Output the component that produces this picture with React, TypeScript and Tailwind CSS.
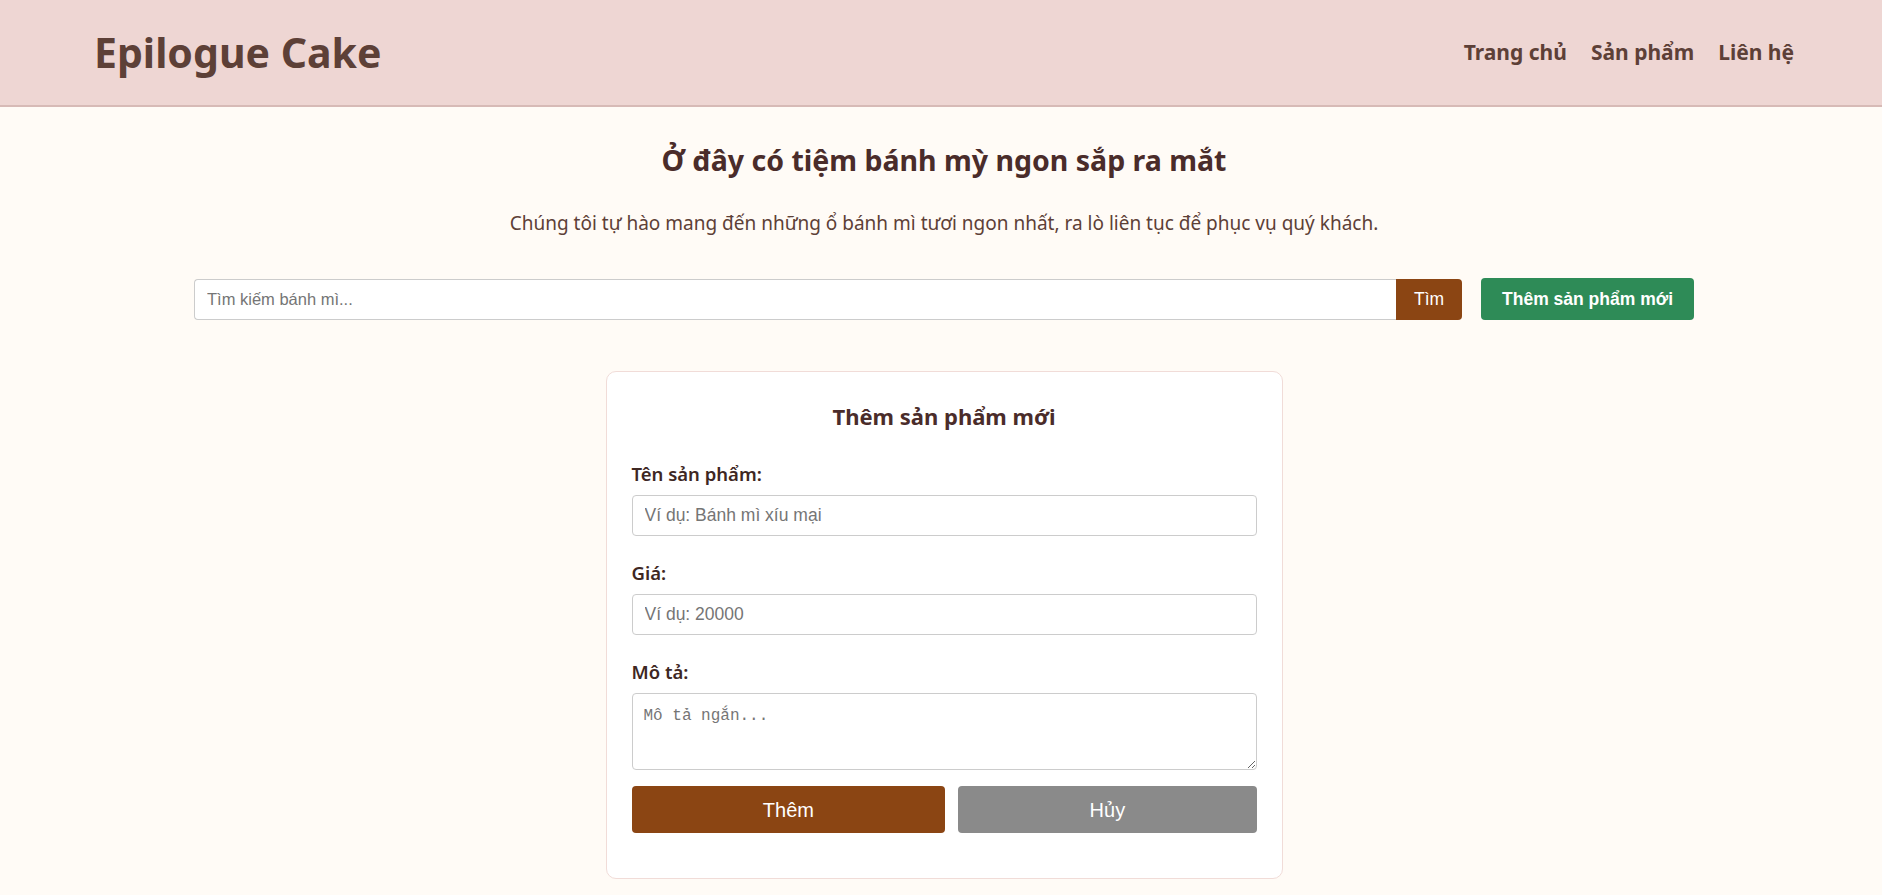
import { useState } from 'react';

export default function App() {
  const [search, setSearch] = useState('');
  const [showForm, setShowForm] = useState(true);

  const inputCls =
    "w-full h-[41px] px-[12px] border border-[#cccccc] rounded-[4px] bg-white text-[17.5px] text-[#333] placeholder:text-[#757575] outline-none font-['Liberation_Sans',Arial,sans-serif]";

  return (
    <div className="min-h-screen bg-[#FFFBF6] font-['Noto_Sans',sans-serif]">
      {/* Header */}
      <header className="h-[107px] bg-[#EED6D3] border-b-2 border-[#D7BAB6] flex items-center justify-between pl-[94px] pr-[88px]">
        <h1 className="text-[41px] font-bold text-[#5D4037] leading-none">Epilogue Cake</h1>
        <nav className="flex items-center gap-[24px] text-[21px] font-bold text-[#5D4037]">
          <a href="#" className="hover:opacity-80">Trang chủ</a>
          <a href="#" className="hover:opacity-80">Sản phẩm</a>
          <a href="#" className="hover:opacity-80">Liên hệ</a>
        </nav>
      </header>

      <main className="pl-[6px] pb-4">
        <h2 className="mt-[35px] text-center text-[28.5px] leading-[36px] font-bold text-[#4A2C2A]">
          Ở đây có tiệm bánh mỳ ngon sắp ra mắt
        </h2>
        <p className="mt-[32px] text-center text-[19px] leading-[27px] text-[#5D4037]">
          Chúng tôi tự hào mang đến những ổ bánh mì tươi ngon nhất, ra lò liên tục để phục vụ quý khách.
        </p>

        {/* Search row */}
        <div className="mt-[41px] w-[1500px] mx-auto flex items-center">
          <input
            value={search}
            onChange={(e) => setSearch(e.target.value)}
            placeholder="Tìm kiếm bánh mì..."
            className="flex-1 h-[41px] px-[12px] border border-[#cccccc] border-r-0 rounded-l-[4px] bg-white text-[16.5px] placeholder:text-[#757575] outline-none font-['Liberation_Sans',Arial,sans-serif]"
          />
          <button className="h-[41px] w-[66px] bg-[#8B4513] text-white text-[17.5px] rounded-r-[4px] font-['Liberation_Sans',Arial,sans-serif]">
            Tìm
          </button>
          <button
            onClick={() => setShowForm(true)}
            className="ml-[19px] h-[42px] px-[21px] bg-[#2E8B57] text-white text-[17.5px] font-bold rounded-[4px] font-['Liberation_Sans',Arial,sans-serif]"
          >
            Thêm sản phẩm mới
          </button>
        </div>

        {/* Form thêm sản phẩm */}
        {showForm && (
          <div className="mt-[51px] w-[677px] mx-auto bg-white border border-[#F1DCD8] rounded-[10px] px-[25px] pt-[29px] pb-[45px]">
            <h3 className="text-center text-[22px] leading-[30px] font-bold text-[#4A2C2A]">Thêm sản phẩm mới</h3>

            <div className="mt-[31px]">
              <label className="block text-[18.5px] leading-[24px] font-semibold text-[#3E2723] mb-[9px]">Tên sản phẩm:</label>
              <input className={inputCls} placeholder="Ví dụ: Bánh mì xíu mại" />
            </div>

            <div className="mt-[25px]">
              <label className="block text-[18.5px] leading-[24px] font-semibold text-[#3E2723] mb-[9px]">Giá:</label>
              <input className={inputCls} placeholder="Ví dụ: 20000" />
            </div>

            <div className="mt-[25px]">
              <label className="block text-[18.5px] leading-[24px] font-semibold text-[#3E2723] mb-[9px]">Mô tả:</label>
              <textarea
                placeholder="Mô tả ngắn..."
                className="block w-full h-[77px] px-[11px] py-[10px] border border-[#cccccc] rounded-[4px] bg-white text-[16px] placeholder:text-[#757575] outline-none font-['Liberation_Mono',monospace]"
              />
            </div>

            <div className="mt-[16px] flex gap-[13px]">
              <button className="flex-auto h-[47px] bg-[#8B4513] text-white text-[20px] rounded-[4px] font-['Liberation_Sans',Arial,sans-serif]">
                Thêm
              </button>
              <button
                onClick={() => setShowForm(false)}
                className="flex-auto h-[47px] bg-[#8A8A8A] text-white text-[20px] rounded-[4px] font-['Liberation_Sans',Arial,sans-serif]"
              >
                Hủy
              </button>
            </div>
          </div>
        )}
      </main>
    </div>
  );
}
